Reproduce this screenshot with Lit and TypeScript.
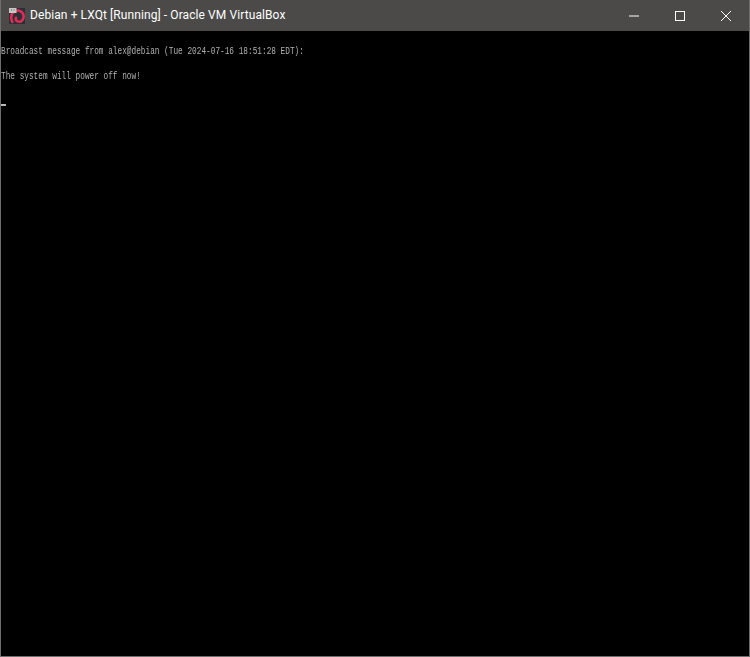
import { LitElement, html, css } from "lit";
import { customElement } from "lit/decorators.js";

@customElement("app-root")
export class AppRoot extends LitElement {
  static styles = css`
    :host { display: block; width: 750px; height: 657px; }
    .window { box-sizing: border-box; width: 750px; height: 657px; display: flex; flex-direction: column; background: #000; border: 1px solid #6e6e6e; border-top: 0; }
    .title { height: 31px; flex: none; background: #4b4a48; display: flex; align-items: center; padding-left: 8px; color: #fff; font: 12px/31px Roboto, "Noto Sans", sans-serif; letter-spacing: 0.09px; }
    .logo { width: 16px; height: 16px; flex: none; margin-right: 5px; }
    .name { flex: 1; white-space: nowrap; }
    .ctl { width: 46px; height: 31px; display: flex; align-items: center; justify-content: center; }
    .ctl svg { width: 12px; height: 12px; display: block; }
    .console { flex: 1; padding: 14px 0 0 0; font: 11px/13px "Liberation Mono", monospace; color: #b0b0b0; overflow: hidden; filter: blur(0.3px); }
    .line { height: 25px; white-space: pre; transform: scaleX(0.706); transform-origin: left top; }
    .cursor { width: 5px; height: 2px; background: #b8b8b8; margin-top: 9px; }
  `;
  render() {
    return html`<div class="window">
      <div class="title">
        <svg class="logo" viewBox="0 0 16 16">
          <rect width="16" height="16" fill="#2a3038"/>
          <path d="M3.4 14C1.2 10.4 2 5.2 6 3.2c4-1.8 8.2.6 8.6 4.6.3 3.4-2 6-4.6 6C7.6 13.8 6.2 11.8 7 9.8" fill="none" stroke="#e02c55" stroke-width="2.6" stroke-linecap="round"/>
          <rect x="0" y="0" width="7.5" height="5" fill="#c8c8c8"/>
          <path d="M2 2h1M4.5 2h1" stroke="#555" fill="none"/>
        </svg>
        <span class="name">Debian + LXQt [Running] - Oracle VM VirtualBox</span>
        <div class="ctl"><svg viewBox="0 0 12 12"><path d="M1 6h10" stroke="#fff" fill="none"/></svg></div>
        <div class="ctl"><svg viewBox="0 0 12 12"><rect x="1.5" y="1.5" width="9" height="9" stroke="#fff" fill="none"/></svg></div>
        <div class="ctl"><svg viewBox="0 0 12 12"><path d="M1 1l10 10M11 1L1 11" stroke="#fff" fill="none"/></svg></div>
      </div>
      <div class="console">
        <div class="line">Broadcast message from alex@debian (Tue 2024-07-16 18:51:28 EDT):</div>
        <div class="line">The system will power off now!</div>
        <div class="cursor"></div>
      </div>
    </div>`;
  }
}
